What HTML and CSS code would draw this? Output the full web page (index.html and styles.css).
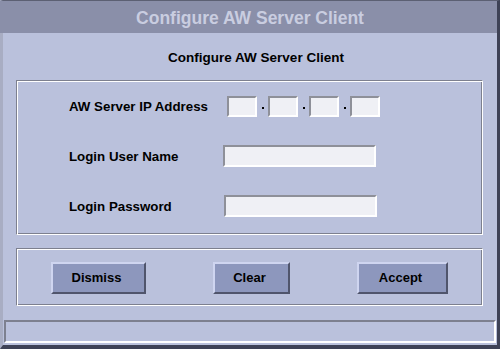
FILE: index.html
```html
<!DOCTYPE html>
<html lang="en">
<head>
    <meta charset="UTF-8">
    <title>Configure AW Server Client</title>
    <link rel="stylesheet" href="styles.css">
</head>
<body>
    <div class="window">
        <div class="titlebar">Configure AW Server Client</div>
        <div class="content">
            <h2 class="heading">Configure AW Server Client</h2>

            <div class="panel form-panel">
                <label class="field-label">AW Server IP Address</label>
                <div class="ip-group">
                    <input class="field ip-part" type="text">
                    <span class="dot"></span>
                    <input class="field ip-part" type="text">
                    <span class="dot"></span>
                    <input class="field ip-part" type="text">
                    <span class="dot"></span>
                    <input class="field ip-part" type="text">
                </div>

                <label class="field-label">Login User Name</label>
                <input class="field text-field" type="text">

                <label class="field-label">Login Password</label>
                <input class="field text-field password" type="password">
            </div>

            <div class="panel button-panel">
                <button class="btn btn-dismiss">Dismiss</button>
                <button class="btn btn-clear">Clear</button>
                <button class="btn btn-accept">Accept</button>
            </div>

            <div class="status-bar"></div>
        </div>
    </div>
</body>
</html>
```

FILE: styles.css
```css
html, body {
    margin: 0;
    padding: 0;
    background-color: #bac1dc;
}
body {
    font-family: 'Liberation Sans', Arial, sans-serif;
    color: #000;
}
.window {
    width: 500px;
    height: 349px;
    box-sizing: border-box;
    border-top: 1px solid #5c6073;
    border-left: 3px solid #a8adc3;
    border-right: 3px solid #3e4256;
    border-bottom: 4px solid #3e4256;
    background-color: #bac1dc;
    display: flex;
    flex-direction: column;
}
.titlebar {
    height: 32px;
    margin-left: -3px;
    padding-left: 3px;
    background-color: #8a8fa9;
    color: #c9cde0;
    font-size: 17.5px;
    font-weight: bold;
    line-height: 35px;
    text-align: center;
}
.content {
    flex: 1;
    display: flex;
    flex-direction: column;
}
.heading {
    margin: 17px 0 0 12px;
    font-size: 13.5px;
    line-height: 16px;
    text-align: center;
}
.panel {
    box-sizing: border-box;
    width: 467px;
    margin-left: 13px;
    border-top: 1px solid #7d808f;
    border-left: 1px solid #7d808f;
    border-right: 1px solid #ffffff;
    border-bottom: 1px solid #ffffff;
    box-shadow: inset 1px 1px 0 #ffffff, inset -1px -1px 0 #7d808f;
}
.form-panel {
    margin-top: 14px;
    height: 155px;
    padding: 14px 0 0 52px;
    display: grid;
    grid-template-columns: 154px 160px;
    grid-auto-rows: 22px;
    row-gap: 28px;
    align-items: center;
}
.field-label {
    font-size: 13.3px;
    font-weight: bold;
    padding-top: 1px;
}
.field {
    box-sizing: border-box;
    height: 22px;
    margin: 0;
    padding: 0 3px;
    background-color: #eff0f5;
    border-top: 2px solid #8e9099;
    border-left: 2px solid #8e9099;
    border-right: 2px solid #ffffff;
    border-bottom: 2px solid #ffffff;
    font-family: inherit;
    font-size: 12px;
}
.ip-group {
    display: flex;
    align-items: center;
    margin-left: 4px;
}
.ip-part {
    width: 30px;
    height: 21px;
}
.dot {
    width: 2px;
    height: 2px;
    margin: 4px 4px 0 5px;
    background-color: #000;
}
.text-field {
    width: 153px;
}
.password {
    margin-left: 1px;
}
.button-panel {
    margin-top: 13px;
    height: 58px;
    padding: 0 34px;
    display: flex;
    justify-content: space-between;
    align-items: center;
}
.btn {
    box-sizing: border-box;
    height: 32px;
    margin-top: 1px;
    padding: 0 4px 0 0;
    background-color: #8d97bd;
    border-top: 2px solid #cfd5f0;
    border-left: 2px solid #cfd5f0;
    border-right: 2px solid #50556c;
    border-bottom: 2px solid #50556c;
    font-family: inherit;
    font-size: 13px;
    font-weight: bold;
    color: #000;
    line-height: 26px;
}
.btn-dismiss {
    width: 95px;
}
.btn-clear {
    width: 77px;
}
.btn-accept {
    width: 91px;
}
.status-bar {
    box-sizing: border-box;
    height: 23px;
    margin: 14px 1px 0 1px;
    border-top: 2px solid #7d808f;
    border-left: 2px solid #7d808f;
    border-right: 2px solid #ffffff;
    border-bottom: 2px solid #ffffff;
}
```
